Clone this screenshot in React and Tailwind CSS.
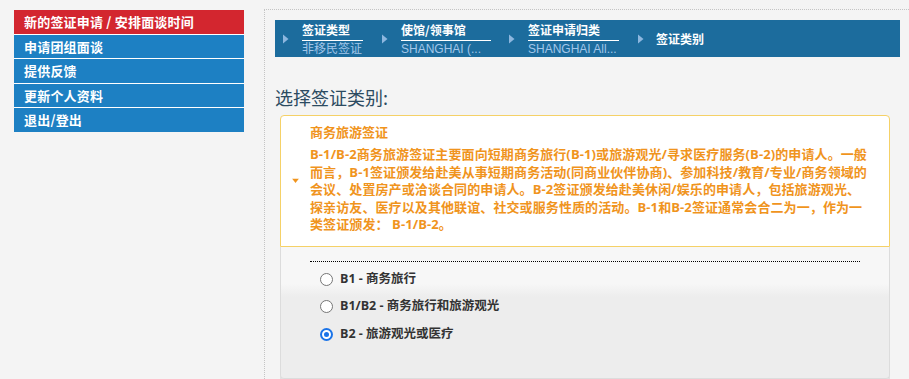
import React from "react";

const CJK = { fontFamily: '"Noto Sans CJK SC", "Noto Sans", sans-serif' };
const MIX = { fontFamily: '"Open Sans", "Noto Sans CJK SC", sans-serif' };
const ARIAL = { fontFamily: '"Liberation Sans", "Noto Sans CJK SC", sans-serif' };

function Arrow() {
  return (
    <svg width="6" height="10" viewBox="0 0 6 10" className="shrink-0">
      <path d="M0 0.5 L5.5 5 L0 9.5 Z" fill="#8db7df" />
    </svg>
  );
}

function Crumb({ label, sub, w }) {
  return (
    <div className="flex items-center">
      <Arrow />
      <div className={`ml-[13px] flex flex-col ${w}`}>
        <div
          className="text-[12px] font-bold text-white leading-[16px] pt-[1px] pb-[2px] border-b border-white whitespace-nowrap"
          style={CJK}
        >
          {label}
        </div>
        <div
          className="text-[12px] leading-[16px] text-[#a3c7ea] whitespace-nowrap overflow-hidden"
          style={ARIAL}
        >
          {sub}
        </div>
      </div>
    </div>
  );
}

const navItems = [
  { t: "新的签证申请 / 安排面谈时间", red: true },
  { t: "申请团组面谈" },
  { t: "提供反馈" },
  { t: "更新个人资料" },
  { t: "退出/登出" },
];

const lines = [
  "B-1/B-2商务旅游签证主要面向短期商务旅行(B-1)或旅游观光/寻求医疗服务(B-2)的申请人。一般",
  "而言，B-1签证颁发给赴美从事短期商务活动(同商业伙伴协商)、参加科技/教育/专业/商务领域的",
  "会议、处置房产或洽谈合同的申请人。B-2签证颁发给赴美休闲/娱乐的申请人，包括旅游观光、",
  "探亲访友、医疗以及其他联谊、社交或服务性质的活动。B-1和B-2签证通常会合二为一，作为一",
  "类签证颁发： B-1/B-2。",
];

const options = [
  { t: "B1 - 商务旅行", c: false },
  { t: "B1/B2 - 商务旅行和旅游观光", c: false },
  { t: "B2 - 旅游观光或医疗", c: true },
];

function Radio({ checked }) {
  if (checked) {
    return (
      <span className="w-[13px] h-[13px] rounded-full bg-[#1a73e8] flex items-center justify-center shrink-0">
        <span className="w-[9px] h-[9px] rounded-full border-[2px] border-white bg-[#1a73e8]" />
      </span>
    );
  }
  return (
    <span className="w-[13px] h-[13px] rounded-full border border-[#767676] bg-white shrink-0" />
  );
}

export default function App() {
  return (
    <div className="min-h-screen w-full bg-[#f4f4f4] flex pl-[14px] overflow-hidden">
      <div className="w-[230px] mt-[10px] shrink-0 flex flex-col gap-[1px] self-start bg-white">
        {navItems.map((n) => (
          <div
            key={n.t}
            className={`h-[23.5px] flex items-center pl-[10px] text-[13px] font-bold text-white tracking-[0.2px] ${
              n.red ? "bg-[#d3262f]" : "bg-[#1d80c3]"
            }`}
            style={CJK}
          >
            {n.t}
          </div>
        ))}
      </div>

      <div className="ml-[20px] mt-[9px] flex-1 border-l border-t border-dotted border-[#c4c4c4] pl-[10px] pt-[10px] pr-[9px] flex flex-col">
        <div className="h-[37px] bg-[#1c6c9d] flex items-start pl-[8px]">
          <div className="flex items-center h-[37px]">
            <Crumb label="签证类型" sub="非移民签证" w="w-[61px]" />
            <div className="w-[19px]" />
            <Crumb label="使馆/领事馆" sub="SHANGHAI (..." w="w-[90px]" />
            <div className="w-[18px]" />
            <Crumb label="签证申请归类" sub="SHANGHAI All..." w="w-[91px]" />
            <div className="w-[19px]" />
            <div className="flex items-center">
              <Arrow />
              <div className="ml-[12px] text-[12px] font-bold text-white" style={CJK}>
                签证类别
              </div>
            </div>
          </div>
        </div>

        <div
          className="mt-[28px] text-[18px] leading-[24px] text-[#2c4b61]"
          style={CJK}
        >
          选择签证类别:
        </div>

        <div className="mt-[6px] ml-[5px] mr-[10px] flex flex-col shadow-[0_2px_0_#dcdcdc] rounded-[4px]">
          <div className="relative bg-white border border-[#f5d167] rounded-t-[4px] pl-[29px] pt-[7px] pb-[12px]">
            <svg
              width="7"
              height="5"
              viewBox="0 0 7 5"
              className="absolute left-[11px] top-1/2 -translate-y-1/2"
            >
              <path d="M0 0 L7 0 L3.5 4.5 Z" fill="#f0941d" />
            </svg>
            <div
              className="text-[13px] font-bold leading-[18px] text-[#f0941d]"
              style={CJK}
            >
              商务旅游签证
            </div>
            <div className="mt-[5px] text-[13px] font-bold leading-[17.5px] text-[#f0941d] tracking-[0.1px]" style={MIX}>
              {lines.map((l, i) => (
                <div key={i} className="whitespace-nowrap">
                  {l}
                </div>
              ))}
            </div>
          </div>
          <div className="h-[132px] border-x border-b border-[#dcdcdc] rounded-b-[4px] bg-[linear-gradient(to_bottom,#f7f7f7_28%,#ededed_38%)] px-[29px] pt-[14px]">
            <div className="border-t border-dotted border-black" />
            <div className="pt-[4px] pl-[10px] flex flex-col">
              {options.map((o) => (
                <div key={o.t} className="h-[27.5px] flex items-center">
                  <Radio checked={o.c} />
                  <span
                    className="ml-[7px] text-[12.5px] font-bold text-[#333333]"
                    style={MIX}
                  >
                    {o.t}
                  </span>
                </div>
              ))}
            </div>
          </div>
        </div>
      </div>
    </div>
  );
}
